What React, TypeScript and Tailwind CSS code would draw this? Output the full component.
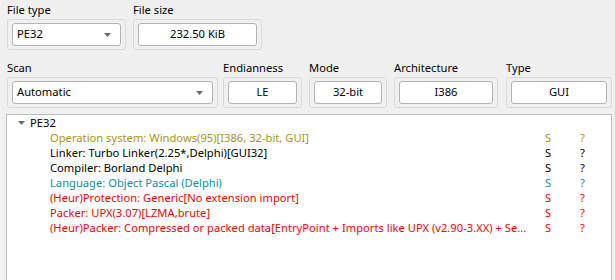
import React from 'react';

type Row = { text: string; color: string };

const rows: Row[] = [
  { text: 'Operation system: Windows(95)[I386, 32-bit, GUI]', color: 'text-[#a8951a]' },
  { text: 'Linker: Turbo Linker(2.25*,Delphi)[GUI32]', color: 'text-black' },
  { text: 'Compiler: Borland Delphi', color: 'text-black' },
  { text: 'Language: Object Pascal (Delphi)', color: 'text-[#12909a]' },
  { text: '(Heur)Protection: Generic[No extension import]', color: 'text-[#ff0000]' },
  { text: 'Packer: UPX(3.07)[LZMA,brute]', color: 'text-[#ff0000]' },
  {
    text: '(Heur)Packer: Compressed or packed data[EntryPoint + Imports like UPX (v2.90-3.XX) + Se...',
    color: 'text-[#ff0000]',
  },
];

function Arrow() {
  return (
    <svg width="7" height="4" viewBox="0 0 7 4" className="shrink-0">
      <path d="M0 0H7L3.5 4Z" fill="#6b6b6b" />
    </svg>
  );
}

function Combo({ value }: { value: string }) {
  return (
    <div className="flex h-[23px] flex-1 items-center justify-between rounded-[3px] border border-[#b3b3b3] bg-white pl-[4px] pr-[9px]">
      <span>{value}</span>
      <Arrow />
    </div>
  );
}

function Edit({ value }: { value: string }) {
  return (
    <div className="flex h-[23px] flex-1 items-center justify-center rounded-[3px] border border-[#b3b3b3] bg-white">
      {value}
    </div>
  );
}

function Field({ label, width, children }: { label: string; width: string; children: React.ReactNode }) {
  return (
    <div className={`flex flex-col ${width}`}>
      <div className="h-[16px] pt-[2px] leading-[16px]">{label}</div>
      <div className="mt-[3px] flex h-[31px] rounded-[3px] border border-[#dadada] px-[4px] py-[3px]">{children}</div>
    </div>
  );
}

export default function App() {
  return (
    <div
      className="h-[280px] w-[615px] overflow-hidden bg-[#f0f0f0] text-[11.2px] text-black"
      style={{ fontFamily: '"Noto Sans", "Open Sans", sans-serif' }}
    >
      <div className="flex gap-[7px] pl-[7px] pt-0">
        <Field label="File type" width="w-[119px]">
          <Combo value="PE32" />
        </Field>
        <Field label="File size" width="w-[129px]">
          <Edit value="232.50 KiB" />
        </Field>
      </div>

      <div className="mt-[8px] flex pl-[7px]">
        <Field label="Scan" width="w-[211px]">
          <Combo value="Automatic" />
        </Field>
        <div className="ml-[5px]">
          <Field label="Endianness" width="w-[79px]">
            <Edit value="LE" />
          </Field>
        </div>
        <div className="ml-[7px]">
          <Field label="Mode" width="w-[78px]">
            <Edit value="32-bit" />
          </Field>
        </div>
        <div className="ml-[7px]">
          <Field label="Architecture" width="w-[104px]">
            <Edit value="I386" />
          </Field>
        </div>
        <div className="ml-[8px]">
          <Field label="Type" width="w-[106px]">
            <Edit value="GUI" />
          </Field>
        </div>
      </div>

      <div className="ml-[6px] mr-[3px] mt-[6px] h-[200px] border border-[#bdbdbd] bg-white">
        <div className="flex h-[15px] items-center leading-[15px]">
          <div className="flex w-[23px] justify-end pr-[5px]">
            <Arrow />
          </div>
          <span>PE32</span>
        </div>
        {rows.map((r) => (
          <div key={r.text} className={`flex h-[15px] items-center leading-[15px] ${r.color}`}>
            <span className="ml-[43px] w-[490px] shrink-0 overflow-hidden whitespace-nowrap">{r.text}</span>
            <span className="ml-[5px] w-[35px] shrink-0">S</span>
            <span>?</span>
          </div>
        ))}
      </div>
    </div>
  );
}
